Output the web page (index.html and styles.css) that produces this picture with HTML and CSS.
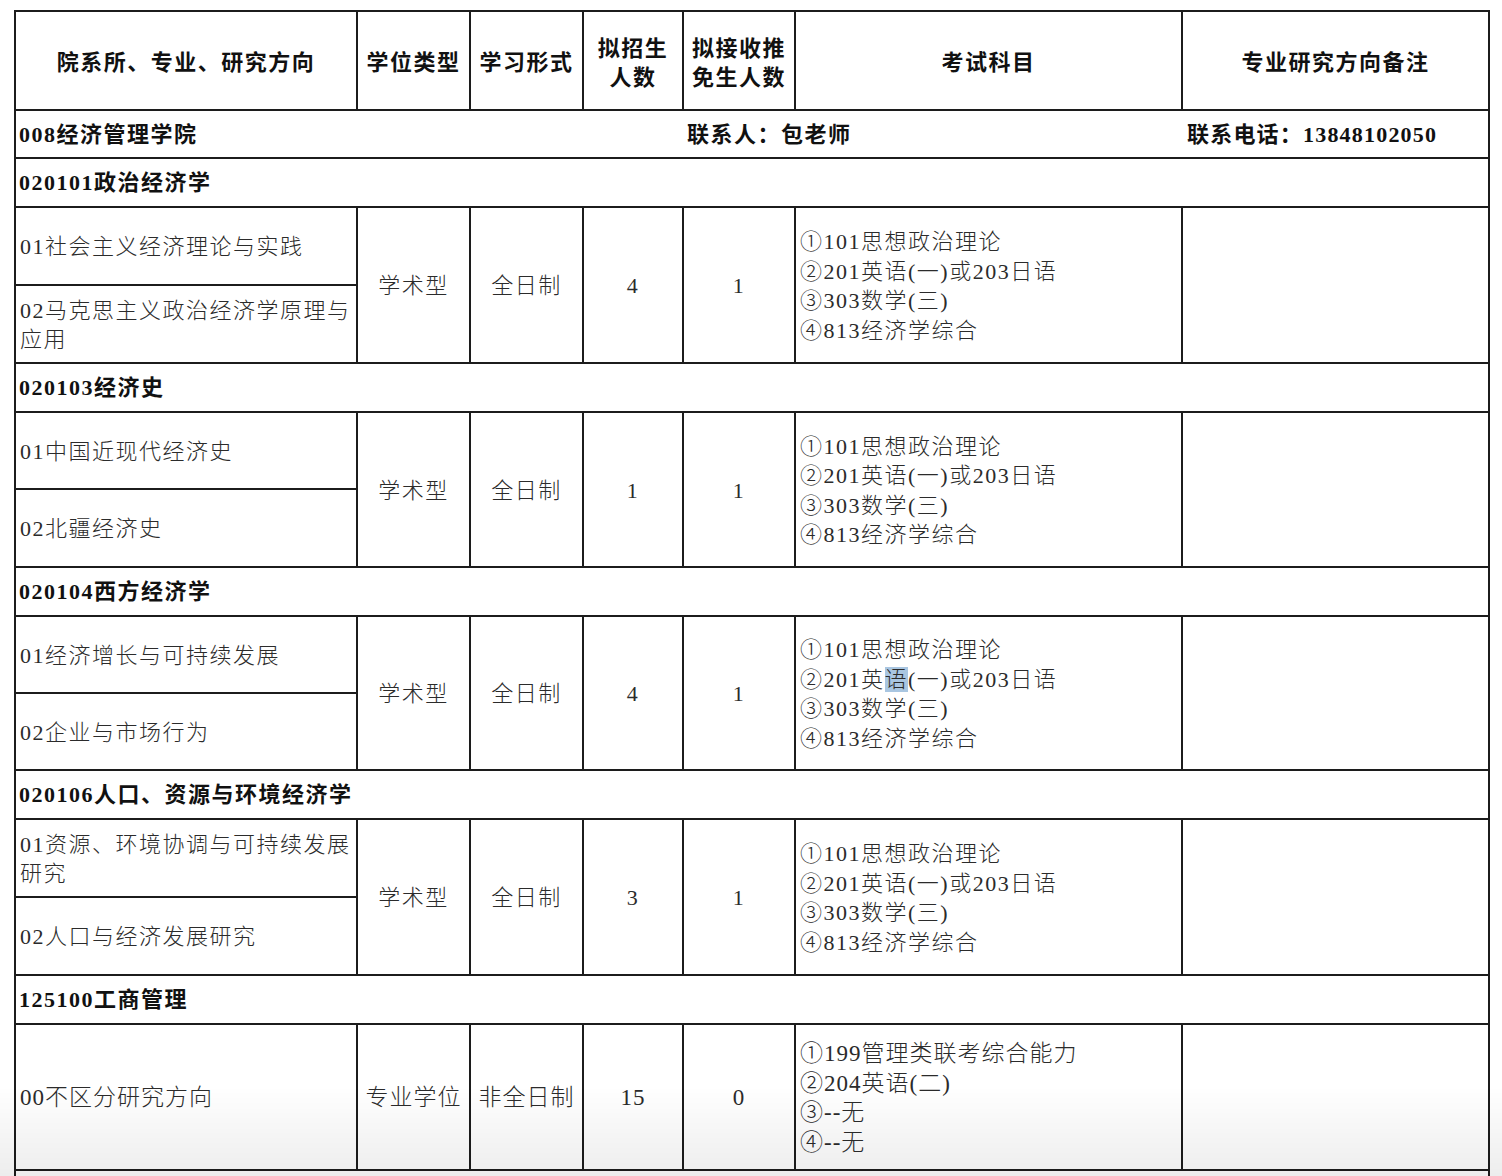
FILE: index.html
```html
<!DOCTYPE html>
<html lang="zh-CN">
<head>
<meta charset="utf-8">
<title>招生专业目录</title>
<link rel="stylesheet" href="styles.css">
</head>
<body>
<table class="plan">
  <colgroup>
    <col class="c-dir">
    <col class="c-type">
    <col class="c-form">
    <col class="c-num">
    <col class="c-tm">
    <col class="c-exam">
    <col class="c-note">
  </colgroup>
  <thead>
    <tr class="head">
      <th>院系所、专业、研究方向</th>
      <th>学位类型</th>
      <th>学习形式</th>
      <th>拟招生<br>人数</th>
      <th>拟接收推<br>免生人数</th>
      <th>考试科目</th>
      <th>专业研究方向备注</th>
    </tr>
  </thead>
  <tbody>
    <tr class="dept">
      <td colspan="4" class="d-name">008经济管理学院</td>
      <td colspan="2" class="d-contact">联系人：包老师</td>
      <td class="d-phone">联系电话：13848102050</td>
    </tr>

    <tr class="grp"><td colspan="7">020101政治经济学</td></tr>
    <tr class="sub">
      <td class="dir">01社会主义经济理论与实践</td>
      <td rowspan="2" class="ctr">学术型</td>
      <td rowspan="2" class="ctr">全日制</td>
      <td rowspan="2" class="ctr num">4</td>
      <td rowspan="2" class="ctr num">1</td>
      <td rowspan="2" class="exam">①101思想政治理论<br>②201英语(一)或203日语<br>③303数学(三)<br>④813经济学综合</td>
      <td rowspan="2" class="note"></td>
    </tr>
    <tr class="sub"><td class="dir">02马克思主义政治经济学原理与<br>应用</td></tr>

    <tr class="grp"><td colspan="7">020103经济史</td></tr>
    <tr class="sub short">
      <td class="dir">01中国近现代经济史</td>
      <td rowspan="2" class="ctr">学术型</td>
      <td rowspan="2" class="ctr">全日制</td>
      <td rowspan="2" class="ctr num">1</td>
      <td rowspan="2" class="ctr num">1</td>
      <td rowspan="2" class="exam">①101思想政治理论<br>②201英语(一)或203日语<br>③303数学(三)<br>④813经济学综合</td>
      <td rowspan="2" class="note"></td>
    </tr>
    <tr class="sub"><td class="dir">02北疆经济史</td></tr>

    <tr class="grp"><td colspan="7">020104西方经济学</td></tr>
    <tr class="sub short">
      <td class="dir">01经济增长与可持续发展</td>
      <td rowspan="2" class="ctr">学术型</td>
      <td rowspan="2" class="ctr">全日制</td>
      <td rowspan="2" class="ctr num">4</td>
      <td rowspan="2" class="ctr num">1</td>
      <td rowspan="2" class="exam">①101思想政治理论<br>②201英<span class="sel">语</span>(一)或203日语<br>③303数学(三)<br>④813经济学综合</td>
      <td rowspan="2" class="note"></td>
    </tr>
    <tr class="sub short"><td class="dir">02企业与市场行为</td></tr>

    <tr class="grp"><td colspan="7">020106人口、资源与环境经济学</td></tr>
    <tr class="sub">
      <td class="dir">01资源、环境协调与可持续发展<br>研究</td>
      <td rowspan="2" class="ctr">学术型</td>
      <td rowspan="2" class="ctr">全日制</td>
      <td rowspan="2" class="ctr num">3</td>
      <td rowspan="2" class="ctr num">1</td>
      <td rowspan="2" class="exam">①101思想政治理论<br>②201英语(一)或203日语<br>③303数学(三)<br>④813经济学综合</td>
      <td rowspan="2" class="note"></td>
    </tr>
    <tr class="sub"><td class="dir">02人口与经济发展研究</td></tr>

    <tr class="grp"><td colspan="7">125100工商管理</td></tr>
    <tr class="big cond">
      <td class="dir">00不区分研究方向</td>
      <td class="ctr">专业学位</td>
      <td class="ctr">非全日制</td>
      <td class="ctr num">15</td>
      <td class="ctr num">0</td>
      <td class="exam">①199管理类联考综合能力<br>②204英语(二)<br>③--无<br>④--无</td>
      <td class="note"></td>
    </tr>
    <tr class="grp"><td colspan="7">&nbsp;</td></tr>
  </tbody>
</table>
<div class="fade"></div>
</body>
</html>
```

FILE: styles.css
```css
html, body {
  margin: 0;
  padding: 0;
  background: #ffffff;
}

body {
  padding: 10px 0 0 14px;
  font-family: "Liberation Serif", "Noto Sans CJK SC", serif;
  color: #2b2b2b;
  overflow: hidden;
  height: 1176px;
  box-sizing: border-box;
}

.plan {
  border-collapse: collapse;
  table-layout: fixed;
  width: 1474px;
  font-size: 22px;
  letter-spacing: 1.5px;
}

.c-dir { width: 342px; }
.c-type { width: 113px; }
.c-form { width: 113px; }
.c-num { width: 100px; }
.c-tm { width: 112px; }
.c-exam { width: 387px; }
.c-note { width: 307px; }

.plan th,
.plan td {
  border: 2px solid #1c1c1c;
  padding: 0 4px;
  vertical-align: middle;
  line-height: 29.5px;
  overflow: hidden;
  white-space: nowrap;
}

.head th {
  height: 97px;
  font-family: "Noto Sans CJK SC", sans-serif;
  font-weight: 700;
  color: #111;
  text-align: center;
  padding: 0 2px;
  line-height: 29px;
}

.dept td,
.grp td {
  height: 46px;
  font-weight: 700;
  color: #111;
  padding: 1px 4px 0 3px;
}

.dept td {
  height: 45px;
  font-family: "Liberation Serif", "Noto Sans CJK SC", serif;
}

.dept .d-name { border-right-style: hidden; }
.dept .d-contact { border-left-style: hidden; border-right-style: hidden; padding-left: 4px; }
.dept .d-phone { border-left-style: hidden; padding-left: 5px; letter-spacing: 1.2px; }

.sub td {
  height: 74px;
  padding-top: 2px;
}

.sub.short td {
  height: 73px;
}

.dir {
  padding-left: 3px;
  font-weight: 300;
}

.ctr {
  text-align: center;
  font-weight: 300;
}

.num {
  font-family: "Liberation Serif", serif;
  font-weight: 400;
  padding-left: 6px;
}

.exam {
  padding-left: 4px;
  font-weight: 300;
}

.sel {
  background: #a9c6e1;
}

.big td {
  height: 142px;
  padding-top: 2px;
}

.cond td {
  font-size: 23px;
  letter-spacing: 1px;
  line-height: 29.5px;
}

.fade {
  position: fixed;
  left: 0;
  right: 0;
  bottom: 0;
  height: 90px;
  background: linear-gradient(to bottom, rgba(0, 0, 0, 0), rgba(0, 0, 0, 0.07));
  pointer-events: none;
}
```
